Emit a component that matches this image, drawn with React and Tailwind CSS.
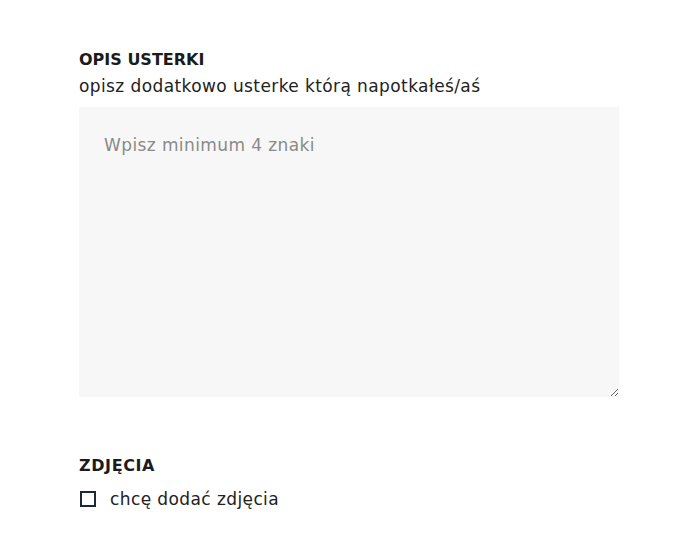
export default function App() {
  return (
    <div className="w-[680px] h-[545px] bg-white" style={{ fontFamily: '"DejaVu Sans", "Open Sans", sans-serif' }}>
      <div className="pl-[79px] pt-[49px] w-[619px]">
        <div className="text-[16px] leading-[22px] font-bold text-[#1b1b1b]">OPIS USTERKI</div>
        <div className="mt-[2px] text-[17px] leading-[26px] text-[#222] tracking-[0.4px]">opisz dodatkowo usterke którą napotkałeś/aś</div>
        <textarea
          className="block mt-[8px] w-[540px] h-[290px] bg-[#f7f7f7] pl-[25px] pt-[25px] text-[17px] leading-[26px] text-[#222] tracking-[0.4px] placeholder:text-[#8a8a8a] outline-none"
          placeholder="Wpisz minimum 4 znaki"
        />
        <div className="mt-[58px] text-[16px] leading-[22px] font-bold text-[#1b1b1b] tracking-[0.6px]">ZDJĘCIA</div>
        <label className="mt-[10px] flex items-center gap-[14px]">
          <span className="w-[16px] h-[16px] border-2 border-[#1d2a35] ml-[1px]" />
          <span className="text-[17px] leading-[24px] text-[#222] tracking-[0.4px]">chcę dodać zdjęcia</span>
        </label>
      </div>
    </div>
  );
}
